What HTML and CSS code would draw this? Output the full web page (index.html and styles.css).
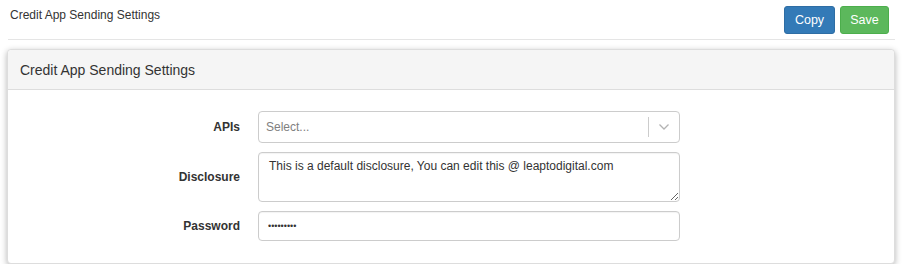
FILE: index.html
```html
<!DOCTYPE html>
<html lang="en">
<head>
    <meta charset="UTF-8">
    <meta name="viewport" content="width=device-width, initial-scale=1.0">
    <title>Credit App Sending Settings</title>
    <link rel="stylesheet" href="styles.css">
</head>
<body>
    <div class="page-header">
        <div class="page-title">Credit App Sending Settings</div>
        <div class="actions">
            <button class="btn btn-primary">Copy</button>
            <button class="btn btn-success">Save</button>
        </div>
    </div>

    <div class="panel">
        <div class="panel-heading">Credit App Sending Settings</div>
        <div class="panel-body">
            <div class="form-row">
                <label class="form-label">APIs</label>
                <div class="select">
                    <span class="select-value">Select...</span>
                    <span class="select-arrow">
                        <svg width="12" height="8" viewBox="0 0 12 8"><path d="M1.5 1.5 L6 6 L10.5 1.5" fill="none" stroke="#b3b3b3" stroke-width="1.3"/></svg>
                    </span>
                </div>
            </div>
            <div class="form-row">
                <label class="form-label">Disclosure</label>
                <textarea class="form-control textarea">This is a default disclosure, You can edit this @ leaptodigital.com</textarea>
            </div>
            <div class="form-row">
                <label class="form-label">Password</label>
                <input type="password" class="form-control password" value="secret123">
            </div>
        </div>
    </div>
</body>
</html>
```

FILE: styles.css
```css
body {
    font-family: "Liberation Sans", Arial, sans-serif;
    font-size: 12px;
    color: #333;
    background-color: #fff;
    margin: 0;
    padding: 0 7px 0 7px;
}
.page-header {
    display: flex;
    justify-content: space-between;
    align-items: flex-start;
    height: 40px;
    border-bottom: 1px solid #e5e5e5;
    box-sizing: border-box;
    margin-left: 1px;
}
.page-title {
    padding: 8px 0 0 2px;
    font-size: 12px;
}
.actions {
    display: flex;
    gap: 5px;
    padding-top: 6px;
    margin-right: 6px;
}
.btn {
    font-family: "Liberation Sans", Arial, sans-serif;
    font-size: 12.5px;
    color: #fff;
    height: 28px;
    padding: 0 8px;
    border: 1px solid transparent;
    border-radius: 3px;
    cursor: pointer;
}
.btn-primary {
    background-color: #337ab7;
    border-color: #2e6da4;
    width: 51px;
}
.btn-success {
    background-color: #5cb85c;
    border-color: #4cae4c;
    width: 49px;
}
/* Panel */
.panel {
    margin-top: 9px;
    border: 1px solid #ddd;
    border-radius: 4px;
    box-shadow: 0 2px 6px rgba(0, 0, 0, 0.3);
    background-color: #fff;
}
.panel-heading {
    background-color: #f5f5f5;
    border-bottom: 1px solid #ddd;
    border-radius: 4px 4px 0 0;
    padding: 12px 12px 11px;
    font-size: 14px;
    line-height: 16px;
}
.panel-body {
    padding: 21px 0 22px;
    display: flex;
    flex-direction: column;
    gap: 9px;
}
.form-row {
    display: grid;
    grid-template-columns: 232px 422px;
    column-gap: 18px;
    align-items: center;
}
.form-label {
    text-align: right;
    font-weight: bold;
    font-size: 12px;
}
.form-control {
    box-sizing: border-box;
    width: 422px;
    height: 30px;
    border: 1px solid #ccc;
    border-radius: 4px;
    padding: 4px 10px;
    font-family: "Liberation Sans", Arial, sans-serif;
    font-size: 12px;
    color: #333;
    box-shadow: inset 0 1px 1px rgba(0, 0, 0, 0.05);
}
.password {
    font-size: 9px;
    padding-left: 9px;
}
.textarea {
    height: 50px;
    padding: 6px 10px;
    resize: vertical;
    display: block;
}
.select {
    box-sizing: border-box;
    display: flex;
    align-items: center;
    height: 32px;
    border: 1px solid #ccc;
    border-radius: 4px;
}
.select-value {
    flex: 1;
    padding-left: 7px;
    color: #808080;
}
.select-arrow {
    display: flex;
    align-items: center;
    justify-content: center;
    width: 30px;
    height: 20px;
    border-left: 1px solid #ccc;
}
```
